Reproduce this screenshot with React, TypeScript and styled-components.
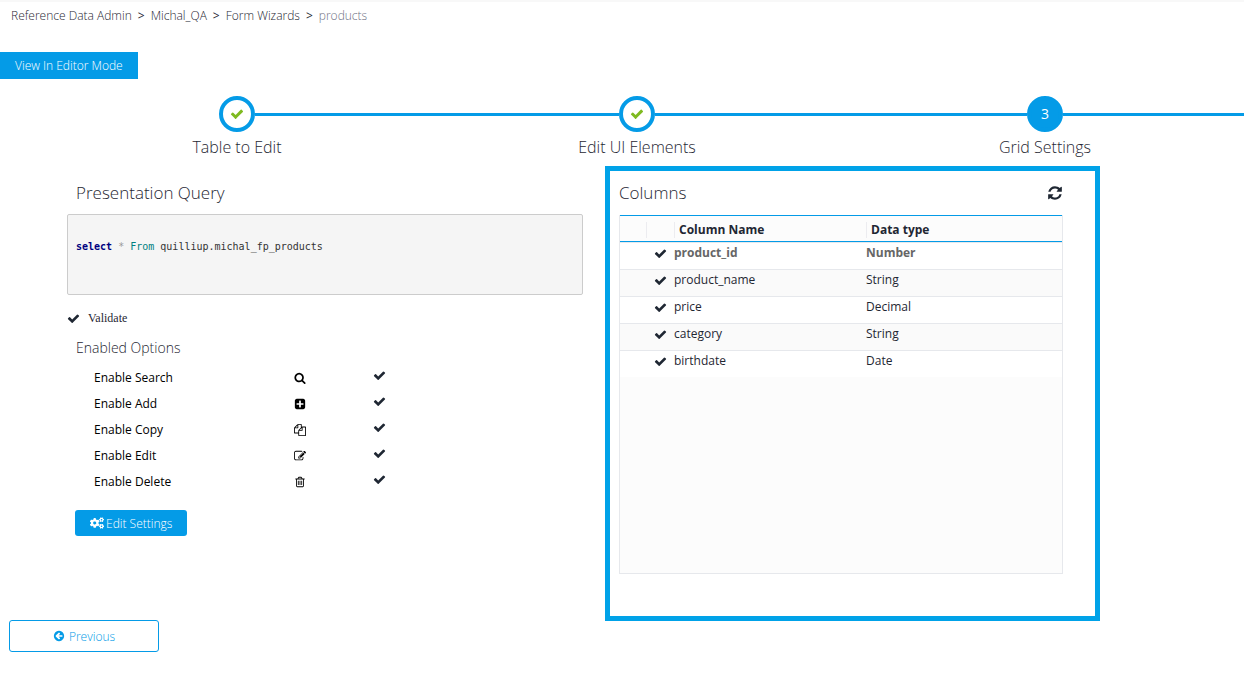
import React from "react";
import styled, { createGlobalStyle } from "styled-components";
import { FaCogs } from "react-icons/fa";

const BLUE = "#049be7";
const INK = "#1f2733";

const GlobalStyle = createGlobalStyle`
  *, *::before, *::after { box-sizing: border-box; }
  body {
    margin: 0;
    background: #fff;
    color: ${INK};
    font: 12px/16px "Open Sans", sans-serif;
  }
  h2, h3, p, ul, ol, pre { margin: 0; padding: 0; font-weight: 300; }
  ul, ol { list-style: none; }
  button { font-family: inherit; cursor: pointer; }
`;

const PATHS = {
  check:
    "M1671 566q0 40-28 68l-724 724-136 136q-28 28-68 28t-68-28l-136-136-362-362q-28-28-28-68t28-68l136-136q28-28 68-28t68 28l294 295 656-657q28-28 68-28t68 28l136 136q28 28 28 68z",
  search:
    "M1216 832q0-185-131.5-316.5t-316.5-131.5-316.5 131.5-131.5 316.5 131.5 316.5 316.5 131.5 316.5-131.5 131.5-316.5zm512 832q0 52-38 90t-90 38q-54 0-90-38l-343-342q-179 124-399 124-143 0-273.5-55.5t-225-150-150-225-55.5-273.5 55.5-273.5 150-225 225-150 273.5-55.5 273.5 55.5 225 150 150 225 55.5 273.5q0 220-124 399l343 343q37 37 37 90z",
  add: "M1408 960v-128q0-26-19-45t-45-19h-320v-320q0-26-19-45t-45-19h-128q-26 0-45 19t-19 45v320h-320q-26 0-45 19t-19 45v128q0 26 19 45t45 19h320v320q0 26 19 45t45 19h128q26 0 45-19t19-45v-320h320q26 0 45-19t19-45zm256-544v960q0 119-84.5 203.5t-203.5 84.5h-960q-119 0-203.5-84.5t-84.5-203.5v-960q0-119 84.5-203.5t203.5-84.5h960q119 0 203.5 84.5t84.5 203.5z",
  copy: "M1696 384q40 0 68 28t28 68v1216q0 40-28 68t-68 28h-960q-40 0-68-28t-28-68v-288h-544q-40 0-68-28t-28-68v-672q0-40 20-88t48-76l408-408q28-28 76-48t88-20h416q40 0 68 28t28 68v328q68-40 128-40h416zm-544 213l-299 299h299v-299zm-640-384l-299 299h299v-299zm196 647l316-316v-416h-384v416q0 40-28 68t-68 28h-416v640h512v-256q0-40 20-88t48-76zm956 804v-1152h-384v416q0 40-28 68t-68 28h-416v640h896z",
  edit: "M888 1184l116-116-152-152-116 116v56h96v96h56zm440-720q-16-16-33 1l-350 350q-17 17-1 33t33-1l350-350q17-17 1-33zm80 594v190q0 119-84.5 203.5t-203.5 84.5h-832q-119 0-203.5-84.5t-84.5-203.5v-832q0-119 84.5-203.5t203.5-84.5h832q63 0 117 25 15 7 18 23 3 17-9 29l-49 49q-14 14-32 8-23-6-45-6h-832q-66 0-113 47t-47 113v832q0 66 47 113t113 47h832q66 0 113-47t47-113v-126q0-13 9-22l64-64q15-15 35-7t20 29zm-96-738l288 288-672 672h-288v-288zm444 132l-92 92-288-288 92-92q28-28 68-28t68 28l152 152q28 28 28 68t-28 68z",
  trash:
    "M704 736v576q0 14-9 23t-23 9h-64q-14 0-23-9t-9-23v-576q0-14 9-23t23-9h64q14 0 23 9t9 23zm256 0v576q0 14-9 23t-23 9h-64q-14 0-23-9t-9-23v-576q0-14 9-23t23-9h64q14 0 23 9t9 23zm256 0v576q0 14-9 23t-23 9h-64q-14 0-23-9t-9-23v-576q0-14 9-23t23-9h64q14 0 23 9t9 23zm128 724v-948h-896v948q0 22 7 40.5t14.5 27 10.5 8.5h832q3 0 10.5-8.5t14.5-27 7-40.5zm-672-1076h448l-48-117q-7-9-17-11h-317q-10 2-17 11zm928 32v64q0 14-9 23t-23 9h-96v948q0 83-47 143.5t-113 60.5h-832q-66 0-113-58.5t-47-141.5v-952h-96q-14 0-23-9t-9-23v-64q0-14 9-23t23-9h309l70-167q15-37 54-63t79-26h320q40 0 79 26t54 63l70 167h309q14 0 23 9t9 23z",
  refresh:
    "M1639 1056q0 5-1 7-64 268-268 434.5t-478 166.5q-146 0-282.5-55t-243.5-157l-129 129q-19 19-45 19t-45-19-19-45v-448q0-26 19-45t45-19h448q26 0 45 19t19 45-19 45l-137 137q71 66 161 102t187 36q134 0 250-65t186-179q11-17 53-117 8-23 30-23h192q13 0 22.5 9.5t9.5 22.5zm25-800v448q0 26-19 45t-45 19h-448q-26 0-45-19t-19-45 19-45l138-138q-148-137-349-137-134 0-250 65t-186 179q-11 17-53 117-8 23-30 23h-199q-13 0-22.5-9.5t-9.5-22.5v-7q65-268 270-434.5t480-166.5q146 0 284 55.5t245 156.5l130-129q19-19 45-19t45 19 19 45z",
  back: "M1408 960v-128q0-26-19-45t-45-19h-502l189-189q19-19 19-45t-19-45l-91-91q-18-18-45-18t-45 18l-362 362-91 91q-18 18-18 45t18 45l91 91 362 362q18 18 45 18t45-18l91-91q18-18 18-45t-18-45l-189-189h502q26 0 45-19t19-45zm256-64q0 209-103 385.5t-279.5 279.5-385.5 103-385.5-103-279.5-279.5-103-385.5 103-385.5 279.5-279.5 385.5-103 385.5 103 279.5 279.5 103 385.5z",
};

type IconName = keyof typeof PATHS;

const Svg = styled.svg`
  display: block;
  flex: none;
  fill: currentColor;
`;

const Icon = ({ name, size = 13 }: { name: IconName; size?: number }) => (
  <Svg width={size} height={size} viewBox="0 0 1792 1792" aria-hidden="true">
    <path d={PATHS[name]} />
  </Svg>
);

const Page = styled.main`
  min-height: 100vh;
  border-top: 2px solid #f8f8f8;
  overflow-x: hidden;
`;

const Breadcrumbs = styled.nav`
  padding: 6px 11px;
  font-weight: 300;

  ol {
    display: flex;
  }
  li + li::before {
    content: ">";
    margin: 0 6px;
    font-weight: 400;
  }
  a {
    color: inherit;
    text-decoration: none;
  }
  [aria-current] {
    color: #6f7285;
  }
`;

const ModeButton = styled.button`
  display: block;
  height: 27px;
  margin-top: 22px;
  padding: 0 15px;
  border: 0;
  background: ${BLUE};
  color: #fff;
  font-size: 12px;
  font-weight: 300;
`;

const Stepper = styled.ol`
  display: grid;
  grid-template-columns: 400fr 400fr 416fr;
  margin: 17px -9px 0 37px;
`;

const Step = styled.li`
  text-align: center;
  font-size: 16px;
  font-weight: 300;
  line-height: 24px;
`;

const Track = styled.div`
  display: flex;
  align-items: center;
  height: 36px;
  margin-bottom: 3px;
`;

const Line = styled.span<{ $hidden?: boolean }>`
  flex: 1;
  height: 3px;
  background: ${(p) => (p.$hidden ? "transparent" : BLUE)};
`;

const Marker = styled.span<{ $current?: boolean }>`
  display: grid;
  place-items: center;
  width: 36px;
  height: 36px;
  border: 4px solid ${BLUE};
  border-radius: 50%;
  background: ${(p) => (p.$current ? BLUE : "#fff")};
  color: ${(p) => (p.$current ? "#fff" : "#7fba21")};
  font-size: 14px;
  font-weight: 400;
`;

const Content = styled.div`
  display: grid;
  grid-template-columns: 516fr 495fr;
  gap: 22px;
  min-height: 455px;
  margin-top: 7px;
  padding: 0 144px 0 67px;
`;

const Heading = styled.h2`
  padding-left: 9px;
  font-size: 17px;
  line-height: 24px;
`;

const QuerySection = styled.section`
  padding-top: 15px;
`;

const QueryBox = styled.pre`
  height: 81px;
  margin-top: 9px;
  padding: 24px 8px;
  border: 1px solid #ccc;
  border-radius: 2px;
  background: #f5f5f5;
  color: #333;
  font: 10px/16px "DejaVu Sans Mono", monospace;

  b {
    color: #000080;
  }
  i {
    color: #999;
    font-style: normal;
  }
  em {
    color: #008080;
    font-style: normal;
  }
`;

const Validate = styled.label`
  display: flex;
  align-items: center;
  gap: 8px;
  height: 18px;
  margin-top: 14px;
  font-family: "Liberation Serif", serif;
`;

const TickBox = styled.span`
  display: grid;
  place-items: center;

  > * {
    grid-area: 1 / 1;
  }
  input {
    width: 13px;
    height: 13px;
    margin: 0;
    appearance: none;
  }
  svg {
    visibility: hidden;
    pointer-events: none;
  }
  input:checked + svg {
    visibility: visible;
  }
`;

const Tick = (props: { label?: string }) => (
  <TickBox>
    <input type="checkbox" defaultChecked aria-label={props.label} />
    <Icon name="check" />
  </TickBox>
);

const SubHeading = styled.h3`
  margin: 6px 0 2px;
  padding-left: 9px;
  font-size: 14px;
  line-height: 30px;
`;

const Option = styled.li`
  display: grid;
  grid-template-columns: 200px 79px 13px;
  align-items: center;
  height: 26px;
  padding-left: 27px;
  color: #000;
  font-weight: 400;

  ${TickBox} {
    padding-bottom: 5px;
    color: ${INK};
  }
`;

const SettingsButton = styled.button`
  display: flex;
  align-items: center;
  gap: 2px;
  height: 26px;
  margin: 15px 0 0 8px;
  padding: 0 15px;
  border: 0;
  border-radius: 3px;
  background: ${BLUE};
  color: #fff;
  font-size: 12px;
  font-weight: 300;
`;

const ColumnsPanel = styled.section`
  padding: 10px 32px 42px 9px;
  border: 5px solid #00a2e8;
`;

const PanelHeader = styled.header`
  display: flex;
  align-items: center;
  justify-content: space-between;

  ${Heading} {
    padding-left: 0;
  }
`;

const RefreshButton = styled.button`
  padding: 0;
  border: 0;
  background: none;
  color: ${INK};
`;

const GridBox = styled.div`
  height: 359px;
  margin-top: 10px;
  border: 1px solid #e6e8ec;
  border-top: 0;
  background: #fcfcfc;
`;

const Grid = styled.table`
  width: 100%;
  border-collapse: separate;
  border-spacing: 0;
  table-layout: fixed;
  text-align: left;

  th,
  td {
    padding: 0;
  }
  th {
    height: 27px;
    padding-top: 3px;
    border-top: 1px solid ${BLUE};
    border-bottom: 1px solid ${BLUE};
    font-weight: 700;
  }
  th + th > span {
    display: block;
    height: 16px;
    padding-left: 4px;
    border-left: 1px solid #ececf0;
  }
  td {
    height: 27px;
    padding-bottom: 6px;
    border-bottom: 1px solid #e6e8ec;
  }
  td ${TickBox} {
    justify-content: end;
    padding-right: 7px;
  }
  tbody tr:first-child td {
    height: 28px;
    border-top: 1px solid #e6e8ec;
  }
  tbody tr:last-child td {
    border-bottom-color: #fcfcfc;
  }
`;

const GridRow = styled.tr<{ $key?: boolean }>`
  background: #fff;

  &:nth-child(even) {
    background: #fafafa;
  }
  td {
    color: ${(p) => (p.$key ? "#666" : INK)};
    font-weight: ${(p) => (p.$key ? 700 : 400)};
  }
  ${TickBox} {
    color: ${INK};
  }
`;

const Col = styled.col<{ $width?: string }>`
  width: ${(p) => p.$width ?? "auto"};
`;

const PreviousButton = styled.button`
  display: flex;
  align-items: center;
  justify-content: center;
  gap: 4px;
  width: 150px;
  height: 32px;
  margin: -1px 9px 24px;
  border: 1px solid ${BLUE};
  border-radius: 3px;
  background: #fff;
  color: ${BLUE};
  font-size: 12px;
  font-weight: 300;
`;

const STEPS = ["Table to Edit", "Edit UI Elements", "Grid Settings"];
const CURRENT = 2;

const OPTIONS: { label: string; icon: IconName }[] = [
  { label: "Enable Search", icon: "search" },
  { label: "Enable Add", icon: "add" },
  { label: "Enable Copy", icon: "copy" },
  { label: "Enable Edit", icon: "edit" },
  { label: "Enable Delete", icon: "trash" },
];

const COLUMNS = [
  { name: "product_id", type: "Number", key: true },
  { name: "product_name", type: "String" },
  { name: "price", type: "Decimal" },
  { name: "category", type: "String" },
  { name: "birthdate", type: "Date" },
];

export default function App() {
  return (
    <Page>
      <GlobalStyle />
      <Breadcrumbs aria-label="Breadcrumb">
        <ol>
          <li><a href="#admin">Reference Data Admin</a></li>
          <li><a href="#project">Michal_QA</a></li>
          <li><a href="#wizards">Form Wizards</a></li>
          <li><a href="#products" aria-current="page">products</a></li>
        </ol>
      </Breadcrumbs>
      <ModeButton type="button">View In Editor Mode</ModeButton>

      <Stepper>
        {STEPS.map((label, i) => (
          <Step key={label}>
            <Track>
              <Line $hidden={i === 0} />
              <Marker $current={i === CURRENT}>
                {i < CURRENT ? <Icon name="check" size={14} /> : i + 1}
              </Marker>
              <Line />
            </Track>
            {label}
          </Step>
        ))}
      </Stepper>

      <Content>
        <QuerySection>
          <Heading>Presentation Query</Heading>
          <QueryBox>
            <b>select</b> <i>*</i> <em>From</em> quilliup.michal_fp_products
          </QueryBox>
          <Validate>
            <Tick />
            Validate
          </Validate>
          <SubHeading>Enabled Options</SubHeading>
          <ul>
            {OPTIONS.map((o) => (
              <Option key={o.label}>
                <span>{o.label}</span>
                <Icon name={o.icon} size={12} />
                <Tick label={o.label} />
              </Option>
            ))}
          </ul>
          <SettingsButton type="button">
            <FaCogs size={14} />
            Edit Settings
          </SettingsButton>
        </QuerySection>

        <ColumnsPanel>
          <PanelHeader>
            <Heading>Columns</Heading>
            <RefreshButton type="button" aria-label="Refresh columns">
              <Icon name="refresh" size={16} />
            </RefreshButton>
          </PanelHeader>
          <GridBox>
            <Grid>
              <colgroup>
                <Col $width="26px" />
                <Col $width="28px" />
                <Col $width="192px" />
                <Col />
              </colgroup>
              <thead>
                <tr>
                  <th />
                  <th><span /></th>
                  <th><span>Column Name</span></th>
                  <th><span>Data type</span></th>
                </tr>
              </thead>
              <tbody>
                {COLUMNS.map((c) => (
                  <GridRow key={c.name} $key={c.key}>
                    <td />
                    <td><Tick label={c.name} /></td>
                    <td>{c.name}</td>
                    <td>{c.type}</td>
                  </GridRow>
                ))}
              </tbody>
            </Grid>
          </GridBox>
        </ColumnsPanel>
      </Content>

      <PreviousButton type="button">
        <Icon name="back" size={12} />
        Previous
      </PreviousButton>
    </Page>
  );
}
